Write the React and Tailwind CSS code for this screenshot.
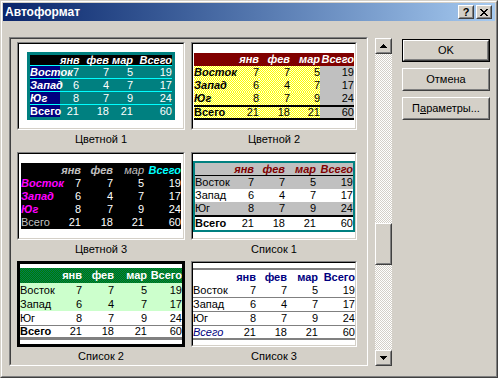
import React from "react";

const D = [
  ["Восток", "7", "7", "5", "19"],
  ["Запад", "6", "4", "7", "17"],
  ["Юг", "8", "7", "9", "24"],
];
const T = ["Всего", "21", "18", "21", "60"];
const H = ["", "янв", "фев", "мар", "Всего"];

const Y = "bg-[repeating-conic-gradient(#ffff00_0_25%,#ffffd8_0_50%)] bg-[length:2px_2px]";
const G = "bg-[repeating-conic-gradient(#008000_0_25%,#007858_0_50%)] bg-[length:2px_2px]";

function Row({ cols, cls, cells, cc = [] }) {
  return (
    <div className={`grid ${cols} ${cls}`}>
      {cells.map((c, i) => (
        <div
          key={i}
          className={`whitespace-nowrap ${i === 0 ? "text-left relative z-10" : "text-right"} ${cc[i] || ""}`}
        >
          {c}
        </div>
      ))}
    </div>
  );
}

function Box({ children, h }) {
  return (
    <div className={`w-full ${h} border border-t-[#808080] border-l-[#808080] border-r-white border-b-white`}>
      <div className="w-full h-full border border-t-black border-l-black border-r-[#d4d0c8] border-b-[#d4d0c8] bg-white flex items-center justify-center overflow-hidden">
        {children}
      </div>
    </div>
  );
}

function Raised({ className = "", children }) {
  return (
    <div className={`border border-t-white border-l-white border-r-[#404040] border-b-[#404040] bg-[#d4d0c8] ${className}`}>
      <div className="w-full h-full border border-t-[#d4d0c8] border-l-[#d4d0c8] border-r-[#808080] border-b-[#808080] flex items-center justify-center">
        {children}
      </div>
    </div>
  );
}

function Cell({ children, label, cls }) {
  return (
    <div className={`flex flex-col items-center ${cls}`}>
      {children}
      <div className="mt-[2px] text-[11px] leading-[14px] text-black">{label}</div>
    </div>
  );
}

function Color1() {
  const cols = "grid-cols-[30px_19px_30px_24px_39px]";
  return (
    <div className="w-[148px] bg-[#008080] p-[3px] text-[11px]">
      <Row cols={cols} cls="h-[10px] leading-[10px] bg-black text-white font-bold italic" cells={H} />
      {D.map((r, i) => (
        <Row key={i} cols={cols} cls="h-[13px] leading-[12px] border-t border-[#00ffff] text-white" cells={r} cc={["bg-[#000080] font-bold italic"]} />
      ))}
      <Row cols={cols} cls="h-[13px] leading-[12px] border-t border-[#00ffff] text-white" cells={T} cc={["bg-[#000080] font-bold"]} />
    </div>
  );
}

function Color2() {
  const cols = "grid-cols-[36px_29px_31px_30px_34px]";
  return (
    <div className="w-[160px] text-[11px]">
      <Row cols={cols} cls="h-[13px] leading-[13px] bg-[#800000] text-white font-bold italic" cells={H} />
      {D.map((r, i) => (
        <Row key={i} cols={cols} cls="h-[13px] leading-[13px] text-black" cells={r} cc={[`${Y} font-bold italic`, Y, Y, Y, "bg-[#c0c0c0]"]} />
      ))}
      <Row cols={cols} cls="h-[15px] leading-[11px] border-y-2 border-black text-black" cells={T} cc={[`font-bold ${Y}`, Y, Y, Y, "bg-[#c0c0c0]"]} />
    </div>
  );
}

function Color3() {
  const cols = "grid-cols-[36px_24px_32px_31px_37px]";
  return (
    <div className="w-[160px] bg-black text-[11px]">
      <Row
        cols={cols}
        cls="h-[14px] leading-[14px]"
        cells={H}
        cc={["", "text-[#c0c0c0] font-bold italic", "text-[#c0c0c0] font-bold italic", "text-[#c0c0c0] italic", "text-[#00ffff] font-bold italic"]}
      />
      {D.map((r, i) => (
        <Row key={i} cols={cols} cls="h-[13px] leading-[13px] text-white" cells={r} cc={["text-[#ff00ff] font-bold italic"]} />
      ))}
      <Row cols={cols} cls="h-[13px] leading-[13px] text-white" cells={T} cc={["text-[#c0c0c0]"]} />
    </div>
  );
}

function List1() {
  const cols = "grid-cols-[34px_25px_31px_31px_37px]";
  return (
    <div className="w-[162px] border-2 border-[#008080] text-[11px] text-black">
      <Row cols={cols} cls="h-[13px] leading-[12px] bg-[#c0c0c0] text-[#800000] font-bold italic border-b border-black" cells={H} />
      <Row cols={cols} cls="h-[13px] leading-[13px] bg-[#c0c0c0]" cells={D[0]} />
      <Row cols={cols} cls="h-[13px] leading-[13px] bg-white" cells={D[1]} />
      <Row cols={cols} cls="h-[13px] leading-[13px] bg-[#c0c0c0]" cells={D[2]} />
      <Row cols={cols} cls="h-[15px] leading-[13px] border-t-2 border-black bg-white" cells={T} cc={["font-bold"]} />
    </div>
  );
}

function List2() {
  const cols = "grid-cols-[37px_25px_32px_33px_35px]";
  return (
    <div className="w-[162px] py-[4px] text-[11px] text-black">
      <Row cols={cols} cls={`h-[15px] leading-[15px] ${G} text-white font-bold`} cells={H} />
      <Row cols={cols} cls="h-[14px] leading-[14px] bg-[#ccffcc]" cells={D[0]} />
      <Row cols={cols} cls="h-[14px] leading-[14px] bg-[#ccffcc]" cells={D[1]} />
      <Row cols={cols} cls="h-[14px] leading-[14px] bg-white" cells={D[2]} />
      <Row cols={cols} cls="h-[12px] leading-[11px] border-t border-[#808080]" cells={T} cc={["font-bold"]} />
      <div className="h-[3px] bg-[#808080]" />
    </div>
  );
}

function List3() {
  const cols = "grid-cols-[37px_26px_31px_31px_37px]";
  return (
    <div className="w-[162px] text-[11px] text-black">
      <div className="h-[2px] bg-[#808080]" />
      <Row cols={cols} cls="h-[14px] leading-[14px] text-[#000080] font-bold" cells={H} />
      {D.map((r, i) => (
        <Row key={i} cols={cols} cls="h-[14px] leading-[13px] border-b border-[#808080]" cells={r} />
      ))}
      <Row cols={cols} cls="h-[12px] leading-[12px]" cells={T} cc={["text-[#000080] italic"]} />
      <div className="h-[2px] bg-[#808080]" />
    </div>
  );
}

function Btn({ children, def }) {
  if (def) {
    return (
      <div className="w-[88px] h-[23px] border border-black">
        <Raised className="w-full h-full">{children}</Raised>
      </div>
    );
  }
  return <Raised className="w-[88px] h-[23px]">{children}</Raised>;
}

export default function App() {
  return (
    <div className="w-[498px] h-[378px] bg-[#d4d0c8] border border-t-[#d4d0c8] border-l-[#d4d0c8] border-r-[#404040] border-b-[#404040] font-['Liberation_Sans',Arial,sans-serif] select-none">
      <div className="w-full h-full border border-t-white border-l-white border-r-[#808080] border-b-[#808080] p-px flex flex-col">
        {/* title bar */}
        <div className="h-[18px] bg-gradient-to-r from-[#0a246a] to-[#a6caf0] flex items-center pl-[2px] pr-[3px]">
          <div className="text-white font-bold text-[12px] leading-[18px] flex-1">Автоформат</div>
          <Raised className="w-[16px] h-[14px]">
            <span className="text-black font-bold text-[11px] leading-[11px]">?</span>
          </Raised>
          <Raised className="w-[16px] h-[14px] ml-[2px]">
            <svg width="8" height="7" viewBox="0 0 8 7" shapeRendering="crispEdges">
              <path d="M0 0h2v1h-2zM6 0h2v1h-2zM1 1h2v1h-2zM5 1h2v1h-2zM2 2h4v1h-4zM3 3h2v1h-2zM2 4h4v1h-4zM1 5h2v1h-2zM5 5h2v1h-2zM0 6h2v1h-2zM6 6h2v1h-2z" fill="#000" />
            </svg>
          </Raised>
        </div>

        {/* body */}
        <div className="flex-1 flex pl-[6px] pt-[16px]">
          {/* list box */}
          <div className="w-[359px] h-[329px] border border-t-[#808080] border-l-[#808080] border-r-white border-b-white">
            <div className="w-full h-full border border-t-[#404040] border-l-[#404040] border-r-[#d4d0c8] border-b-[#d4d0c8] overflow-hidden pl-[6px] pt-[3px]">
              <div className="grid grid-cols-[168px_166px] gap-x-[6px]">
                <Cell label="Цветной 1" cls="h-[110px]">
                  <Box h="h-[88px]"><Color1 /></Box>
                </Cell>
                <Cell label="Цветной 2" cls="h-[110px]">
                  <Box h="h-[88px]"><Color2 /></Box>
                </Cell>
                <Cell label="Цветной 3" cls="h-[109px]">
                  <Box h="h-[88px]"><Color3 /></Box>
                </Cell>
                <Cell label="Список 1" cls="h-[109px]">
                  <Box h="h-[88px]"><List1 /></Box>
                </Cell>
                <Cell label="Список 2" cls="h-[110px]">
                  <div className="w-full h-[86px] border-[3px] border-black bg-white flex items-center justify-center overflow-hidden">
                    <List2 />
                  </div>
                </Cell>
                <Cell label="Список 3" cls="h-[110px]">
                  <Box h="h-[86px]"><List3 /></Box>
                </Cell>
              </div>
            </div>
          </div>

          {/* scrollbar */}
          <div className="ml-[7px] mt-[1px] w-[17px] h-[328px] flex flex-col bg-[repeating-conic-gradient(#d4d0c8_0_25%,#ffffff_0_50%)] bg-[length:2px_2px]">
            <Raised className="w-[17px] h-[16px] shrink-0">
              <svg width="7" height="4" viewBox="0 0 7 4" shapeRendering="crispEdges">
                <path d="M3 0h1v1h-1zM2 1h3v1h-3zM1 2h5v1h-5zM0 3h7v1h-7z" fill="#000" />
              </svg>
            </Raised>
            <div className="h-[169px] shrink-0" />
            <Raised className="w-[17px] h-[42px] shrink-0" />
            <div className="flex-1" />
            <Raised className="w-[17px] h-[16px] shrink-0">
              <svg width="7" height="4" viewBox="0 0 7 4" shapeRendering="crispEdges">
                <path d="M0 0h7v1h-7zM1 1h5v1h-5zM2 2h3v1h-3zM3 3h1v1h-1z" fill="#000" />
              </svg>
            </Raised>
          </div>

          {/* buttons */}
          <div className="ml-[10px] mt-[2px] flex flex-col gap-[6px] text-[11px] text-black">
            <Btn def>OK</Btn>
            <Btn>Отмена</Btn>
            <Btn>
              <span>
                П<span className="underline">а</span>раметры...
              </span>
            </Btn>
          </div>
        </div>
      </div>
    </div>
  );
}
